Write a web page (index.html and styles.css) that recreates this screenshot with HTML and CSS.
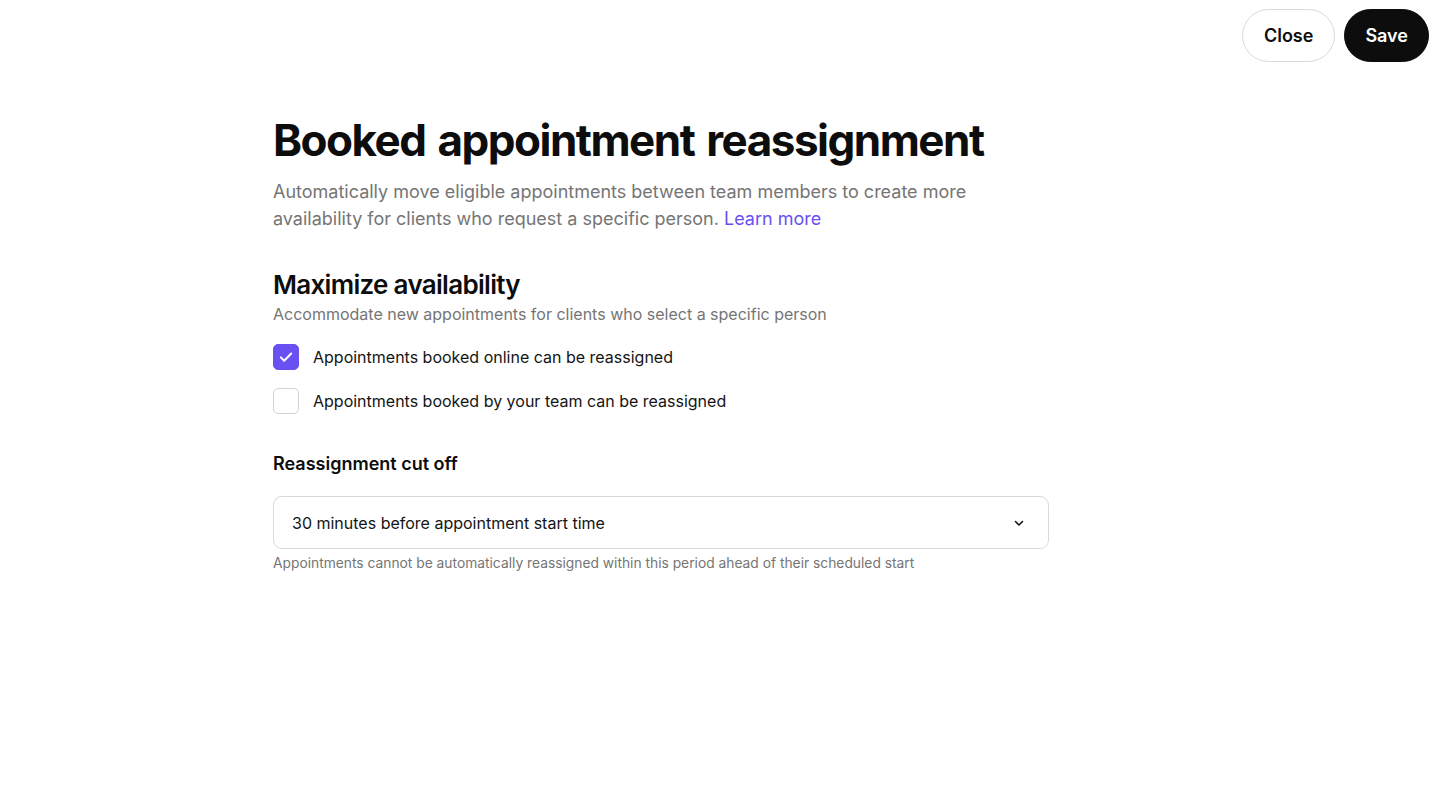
FILE: index.html
```html
<!DOCTYPE html>
<html lang="en">
<head>
<meta charset="utf-8">
<title>Booked appointment reassignment</title>
<link rel="stylesheet" href="styles.css">
</head>
<body>
<header class="topbar">
  <button class="btn btn-outline">Close</button>
  <button class="btn btn-dark">Save</button>
</header>
<main class="content">
  <h1 class="title">Booked appointment reassignment</h1>
  <p class="lead">Automatically move eligible appointments between team members to create more availability for clients who request a specific person. <a class="link" href="#">Learn more</a></p>

  <section class="section">
    <h2 class="section-title">Maximize availability</h2>
    <p class="section-sub">Accommodate new appointments for clients who select a specific person</p>
    <div class="checks">
      <label class="check">
        <span class="box box-on">
          <svg width="18" height="18" viewBox="0 0 18 18" fill="none"><path d="M3.8 9.4l3.4 3.3 7-7.2" stroke="#fff" stroke-width="2" stroke-linecap="round" stroke-linejoin="round"/></svg>
        </span>
        <span class="check-label">Appointments booked online can be reassigned</span>
      </label>
      <label class="check">
        <span class="box"></span>
        <span class="check-label">Appointments booked by your team can be reassigned</span>
      </label>
    </div>
  </section>

  <section class="field">
    <div class="field-label">Reassignment cut off</div>
    <div class="select">
      <span>30 minutes before appointment start time</span>
      <svg width="14" height="14" viewBox="0 0 14 14" fill="none"><path d="M3.5 5.5L7 9l3.5-3.5" stroke="#141414" stroke-width="1.6" stroke-linecap="round" stroke-linejoin="round"/></svg>
    </div>
    <div class="hint">Appointments cannot be automatically reassigned within this period ahead of their scheduled start</div>
  </section>
</main>
</body>
</html>
```

FILE: styles.css
```css
* { box-sizing: border-box; }
html, body { margin: 0; padding: 0; background: #fff; }
body {
  font-family: Inter, "Noto Sans", "Liberation Sans", sans-serif;
  color: #0d0d0d;
  -webkit-font-smoothing: antialiased;
}
.topbar {
  display: flex;
  justify-content: flex-end;
  gap: 9px;
  padding: 9px 11px 0 0;
}
.btn {
  height: 53px;
  border-radius: 27px;
  font-family: inherit;
  font-size: 18px;
  font-weight: 600;
  padding: 0 21px;
  cursor: pointer;
}
.btn-outline {
  background: #fff;
  border: 1px solid #d9d9d9;
  color: #0d0d0d;
}
.btn-dark {
  background: #0d0d0d;
  border: 1px solid #0d0d0d;
  color: #fff;
  padding: 0 20px;
}
.content {
  width: 776px;
  margin: 0 0 0 273px;
  padding-top: 46px;
}
.title {
  margin: 0;
  font-size: 44px;
  font-weight: 700;
  letter-spacing: -1.5px;
  word-spacing: 3px;
  line-height: 64px;
  white-space: nowrap;
}
.lead {
  margin: 6px 0 0;
  width: 720px;
  font-size: 18px;
  line-height: 27px;
  color: #757575;
}
.link { color: #6950f3; text-decoration: none; }
.section { margin-top: 36px; }
.section-title {
  margin: 0;
  font-size: 26px;
  font-weight: 600;
  line-height: 34px;
  letter-spacing: -0.7px;
}
.section-sub {
  margin: 0;
  font-size: 16px;
  line-height: 24px;
  color: #757575;
}
.checks {
  display: flex;
  flex-direction: column;
  gap: 18px;
  margin-top: 18px;
}
.check {
  display: flex;
  align-items: center;
  gap: 14px;
  cursor: pointer;
}
.box {
  width: 26px;
  height: 26px;
  border-radius: 5px;
  border: 1px solid #d3d3d3;
  background: #fff;
  display: flex;
  align-items: center;
  justify-content: center;
}
.box-on { background: #6950f3; border-color: #6950f3; }
.check-label { font-size: 16px; color: #141414; }
.field { margin-top: 38px; }
.field-label {
  font-size: 18px;
  font-weight: 600;
  line-height: 24px;
}
.select {
  margin-top: 20px;
  height: 53px;
  border: 1px solid #d9d9d9;
  border-radius: 9px;
  display: flex;
  align-items: center;
  justify-content: space-between;
  padding: 0 22px 0 18px;
  font-size: 16px;
  color: #141414;
}
.hint {
  margin-top: 5px;
  font-size: 13.8px;
  line-height: 18px;
  color: #757575;
}
```
